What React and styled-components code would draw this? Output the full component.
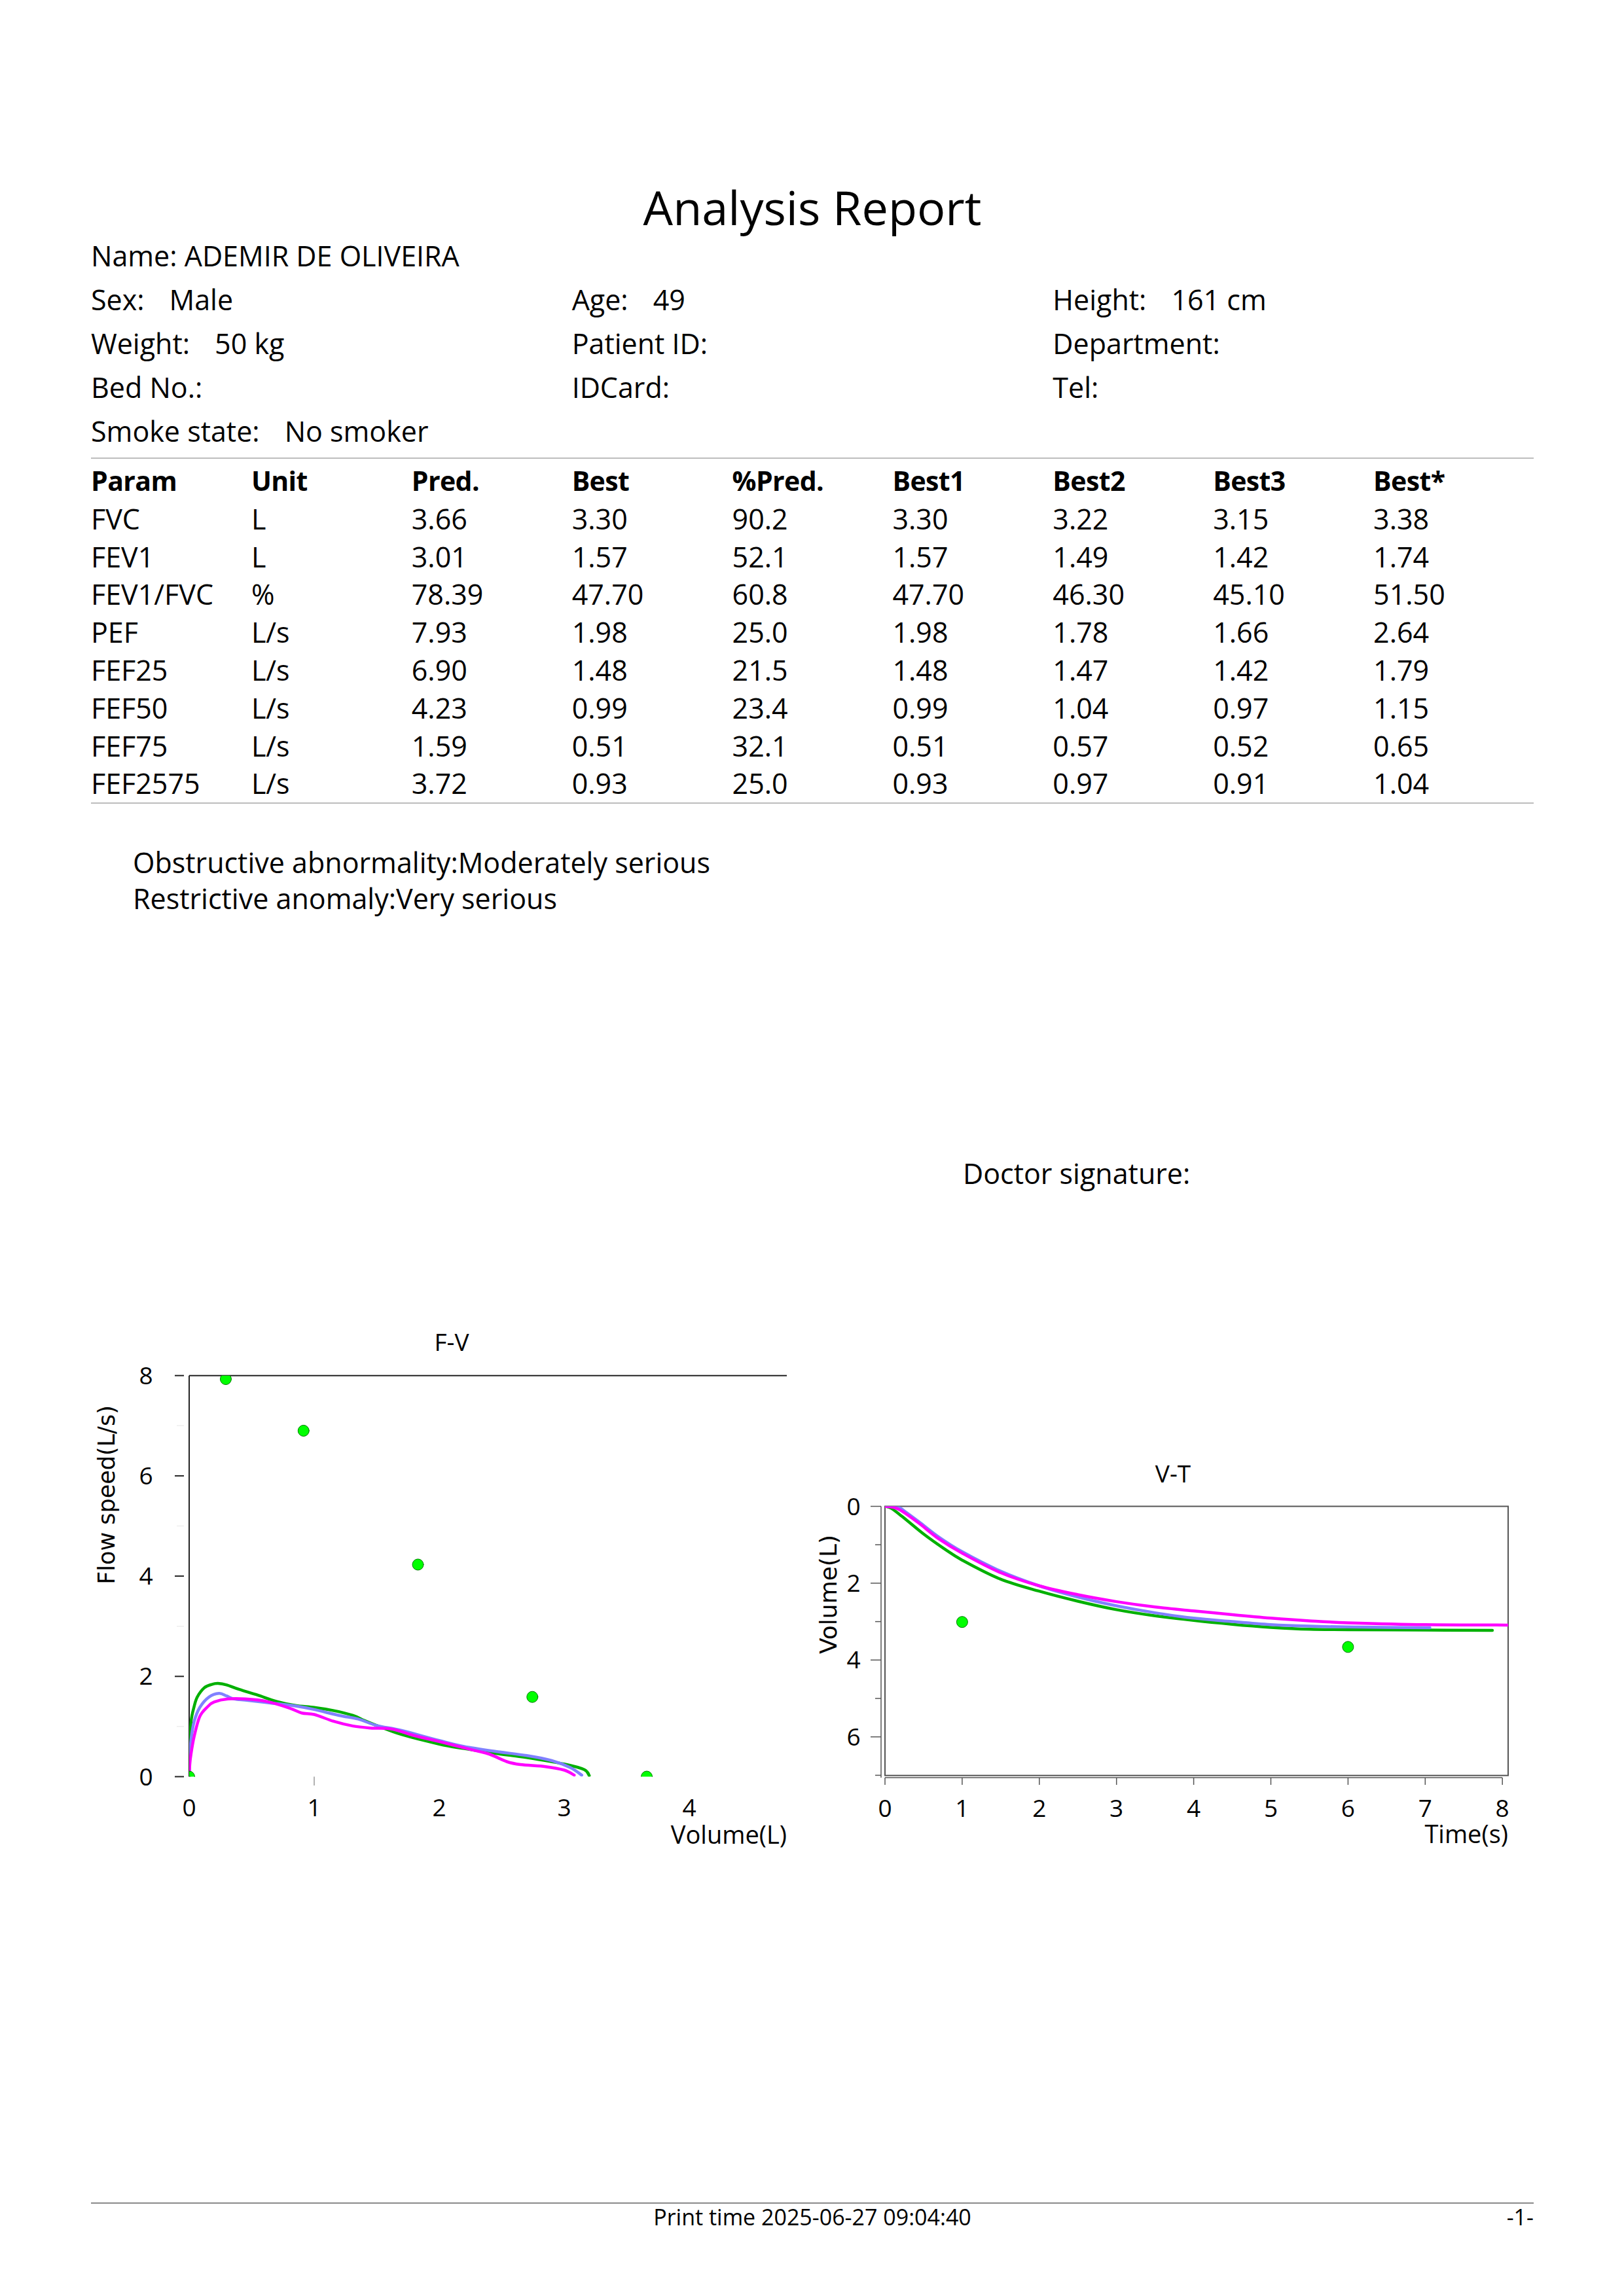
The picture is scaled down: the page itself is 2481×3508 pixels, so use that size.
import React from 'react';
import styled, { createGlobalStyle } from 'styled-components';

const GlobalStyle = createGlobalStyle`
  html, body { margin: 0; padding: 0; background: #ffffff; }
  body { font-family: "Open Sans", "Noto Sans", sans-serif; color: #000; }
`;

const Page = styled.div`
  width: 2481px;
  height: 3508px;
  box-sizing: border-box;
  padding: 275px 138px 0 139px;
  display: flex;
  flex-direction: column;
  background: #fff;
`;

const Title = styled.h1`
  margin: 0;
  font-weight: 400;
  font-size: 72px;
  line-height: 82px;
  text-align: center;
`;

const InfoGrid = styled.div`
  display: grid;
  grid-template-columns: repeat(3, 1fr);
  font-size: 43px;
  line-height: 67px;
`;

const InfoCell = styled.div`
  white-space: nowrap;
  grid-column: ${(p) => (p.$span ? `span ${p.$span}` : 'auto')};
`;

const InfoValue = styled.span`
  margin-left: 38px;
`;

const Table = styled.div`
  margin-top: 7px;
  padding-top: 5px;
  border-top: 2px solid #bdbdbd;
  border-bottom: 2px solid #bdbdbd;
  display: grid;
  grid-template-columns: repeat(9, 1fr);
  font-size: 43px;
  line-height: 57.8px;
`;

const Cell = styled.div`
  white-space: nowrap;
  font-weight: ${(p) => (p.$head ? 700 : 400)};
  font-size: ${(p) => (p.$head ? '41px' : '43px')};
  letter-spacing: ${(p) => (p.$head ? '-0.6px' : '0')};
`;

const Notes = styled.div`
  margin-top: 62px;
  padding-left: 64px;
  font-size: 43px;
  line-height: 55px;
`;

const Signature = styled.div`
  margin-top: 365px;
  margin-left: 1332px;
  font-size: 43px;
  line-height: 55px;
`;

const ChartsRow = styled.div`
  margin-top: 180px;
  display: flex;
`;

const ChartSvg = styled.svg`
  display: block;
  width: ${(p) => p.$w}px;
  height: 840px;
  overflow: visible;
  text {
    font-family: "Open Sans", "Noto Sans", sans-serif;
    fill: #000;
  }
  .axisTitle {
    font-family: "DejaVu Sans", "Verdana", sans-serif;
  }
`;

const Footer = styled.div`
  margin-top: 525px;
  border-top: 2px solid #8a8a8a;
  display: grid;
  grid-template-columns: 1fr auto 1fr;
  font-size: 34px;
  line-height: 40px;
`;

const FooterRight = styled.div`
  justify-self: end;
`;

function smoothPath(pts) {
  let d = `M${pts[0][0].toFixed(1)},${pts[0][1].toFixed(1)}`;
  for (let i = 0; i < pts.length - 1; i++) {
    const p0 = pts[i - 1] || pts[i];
    const p1 = pts[i];
    const p2 = pts[i + 1];
    const p3 = pts[i + 2] || p2;
    const c1x = p1[0] + (p2[0] - p0[0]) / 6;
    const c1y = p1[1] + (p2[1] - p0[1]) / 6;
    const c2x = p2[0] - (p3[0] - p1[0]) / 6;
    const c2y = p2[1] - (p3[1] - p1[1]) / 6;
    d += ` C${c1x.toFixed(1)},${c1y.toFixed(1)} ${c2x.toFixed(1)},${c2y.toFixed(1)} ${p2[0].toFixed(1)},${p2[1].toFixed(1)}`;
  }
  return d;
}

const GREEN = '#00b000';
const BLUE = '#8080ff';
const MAGENTA = '#ff00ff';

const fvGreen = [[0,0],[0.005,0.6],[0.015,1.1],[0.04,1.4],[0.065,1.59],[0.12,1.77],[0.18,1.84],[0.23,1.86],[0.3,1.83],[0.4,1.74],[0.545,1.63],[0.7,1.5],[0.85,1.42],[1.0,1.38],[1.15,1.32],[1.31,1.22],[1.4,1.12],[1.5,1.02],[1.7,0.84],[2.0,0.65],[2.2,0.56],[2.46,0.46],[2.7,0.38],[3.0,0.25],[3.16,0.14],[3.2,0.02]];
const fvBlue = [[0,0],[0.005,0.4],[0.015,0.74],[0.04,1.1],[0.085,1.38],[0.16,1.59],[0.24,1.66],[0.3,1.61],[0.36,1.55],[0.47,1.52],[0.65,1.47],[0.85,1.41],[1.0,1.34],[1.2,1.22],[1.35,1.15],[1.5,1.02],[1.7,0.92],[2.0,0.72],[2.2,0.6],[2.46,0.5],[2.7,0.42],[2.9,0.32],[3.05,0.18],[3.14,0.03]];
const fvMagenta = [[0,0],[0.005,0.25],[0.015,0.46],[0.04,0.8],[0.085,1.2],[0.15,1.4],[0.2,1.49],[0.31,1.55],[0.45,1.55],[0.62,1.5],[0.8,1.37],[0.9,1.27],[1.0,1.24],[1.16,1.1],[1.31,1.01],[1.45,0.97],[1.62,0.95],[1.8,0.82],[2.0,0.7],[2.27,0.53],[2.4,0.45],[2.54,0.3],[2.65,0.24],[2.85,0.2],[3.0,0.13],[3.08,0.03]];
const fvDots = [[0,0],[0.293,7.93],[0.915,6.90],[1.83,4.23],[2.745,1.59],[3.66,0]];

const vtGreen = [[0,0],[0.08,0.05],[0.22,0.26],[0.5,0.72],[0.75,1.08],[1.0,1.4],[1.49,1.89],[2.0,2.21],[2.5,2.47],[3.0,2.69],[3.5,2.85],[4.0,2.97],[4.5,3.07],[5.0,3.15],[5.5,3.2],[6.0,3.21],[7.0,3.22],[7.87,3.23]];
const vtBlue = [[0,0],[0.15,0],[0.25,0.12],[0.44,0.40],[0.7,0.8],[1.0,1.18],[1.49,1.68],[2.0,2.07],[2.5,2.36],[3.0,2.59],[3.5,2.77],[4.0,2.91],[4.5,3.0],[5.0,3.08],[5.5,3.12],[6.0,3.14],[7.06,3.16]];
const vtMagenta = [[0,0],[0.1,0.02],[0.2,0.1],[0.44,0.44],[0.7,0.85],[1.0,1.22],[1.49,1.72],[2.0,2.07],[2.5,2.3],[3.0,2.48],[3.5,2.62],[4.0,2.72],[4.5,2.82],[5.0,2.91],[5.5,2.98],[6.0,3.03],[7.0,3.08],[8.07,3.09]];
const vtDots = [[1, 3.01], [6, 3.66]];

function FVChart() {
  const fx = (v) => 289 + v * 191;
  const fy = (f) => 2714.5 - f * 76.6;
  const map = (pts) => pts.map(([v, f]) => [fx(v), fy(f)]);
  return (
    <ChartSvg $w={1100} viewBox="139 2000 1100 840">
      <defs>
        <clipPath id="fvclip">
          <rect x={289} y={2101.7} width={913} height={612.8} />
        </clipPath>
      </defs>
      <text x={690} y={2064} fontSize={37} textAnchor="middle">F-V</text>
      <line x1={289} y1={2101.7} x2={1202} y2={2101.7} stroke="#222" strokeWidth={2} />
      <line x1={289} y1={2101.7} x2={289} y2={2714.5} stroke="#222" strokeWidth={2} />
      {[1, 3, 5, 7].map((f) => (
        <line key={f} x1={270} y1={fy(f)} x2={281} y2={fy(f)} stroke="#eeeeee" strokeWidth={1.5} />
      ))}
      {[0, 2, 4, 6, 8].map((f) => (
        <g key={f}>
          <line x1={267} y1={fy(f)} x2={281} y2={fy(f)} stroke="#222" strokeWidth={2} />
          <text x={223} y={fy(f) + 13} fontSize={37} textAnchor="middle">{f}</text>
        </g>
      ))}
      <line x1={fx(1)} y1={2714.5} x2={fx(1)} y2={2728} stroke="#999" strokeWidth={1.5} />
      {[0, 1, 2, 3, 4].map((v) => (
        <text key={v} x={fx(v)} y={2775} fontSize={37} textAnchor="middle">{v}</text>
      ))}
      <text x={1202} y={2817} fontSize={38} textAnchor="end">Volume(L)</text>
      <text
        className="axisTitle"
        x={163}
        y={2284}
        fontSize={35}
        textAnchor="middle"
        dominantBaseline="central"
        transform="rotate(-90 163 2284)"
      >
        Flow speed(L/s)
      </text>
      <g clipPath="url(#fvclip)" fill="none" strokeWidth={4.5} strokeLinejoin="round" strokeLinecap="round">
        <path d={smoothPath(map(fvGreen))} stroke={GREEN} />
        <path d={smoothPath(map(fvBlue))} stroke={BLUE} />
        <path d={smoothPath(map(fvMagenta))} stroke={MAGENTA} />
        {fvDots.map(([v, f], i) => (
          <circle key={i} cx={fx(v)} cy={fy(f)} r={8.5} fill="#00ff00" stroke="#007a00" strokeWidth={1} />
        ))}
      </g>
    </ChartSvg>
  );
}

function VTChart() {
  const tx = (t) => 1352 + t * 117.9;
  const ty = (v) => 2301.5 + v * 58.7;
  const map = (pts) => pts.map(([t, v]) => [tx(t), ty(v)]);
  return (
    <ChartSvg $w={1104} viewBox="1239 2000 1104 840">
      <defs>
        <clipPath id="vtclip">
          <rect x={1352} y={2301.5} width={952} height={411.2} />
        </clipPath>
      </defs>
      <text x={1792} y={2265} fontSize={37} textAnchor="middle">V-T</text>
      <rect x={1352} y={2301.5} width={952} height={411.2} fill="none" stroke="#555" strokeWidth={2} />
      <line x1={1346} y1={2301.5} x2={1346} y2={2716} stroke="#555" strokeWidth={1.5} />
      {[0, 1, 2, 3, 4, 5, 6, 7].map((v) => (
        <line key={v} x1={v % 2 === 0 ? 1330 : 1337} y1={ty(v)} x2={1346} y2={ty(v)} stroke="#555" strokeWidth={1.5} />
      ))}
      {[0, 2, 4, 6].map((v) => (
        <text key={v} x={1304} y={ty(v) + 13} fontSize={37} textAnchor="middle">{v}</text>
      ))}
      <line x1={1352} y1={2716} x2={2295} y2={2716} stroke="#555" strokeWidth={1.5} />
      {[0, 1, 2, 3, 4, 5, 6, 7, 8].map((t) => (
        <g key={t}>
          <line x1={tx(t)} y1={2716} x2={tx(t)} y2={2727} stroke="#555" strokeWidth={1.5} />
          <text x={tx(t)} y={2776} fontSize={37} textAnchor="middle">{t}</text>
        </g>
      ))}
      <text x={2304} y={2816} fontSize={38} textAnchor="end">Time(s)</text>
      <text
        className="axisTitle"
        x={1265}
        y={2436}
        fontSize={36}
        textAnchor="middle"
        dominantBaseline="central"
        transform="rotate(-90 1265 2436)"
      >
        Volume(L)
      </text>
      <g clipPath="url(#vtclip)" fill="none" strokeWidth={4.5} strokeLinejoin="round" strokeLinecap="round">
        <path d={smoothPath(map(vtGreen))} stroke={GREEN} />
        <path d={smoothPath(map(vtBlue))} stroke={BLUE} />
        <path d={smoothPath(map(vtMagenta))} stroke={MAGENTA} />
      </g>
      {vtDots.map(([t, v], i) => (
        <circle key={i} cx={tx(t)} cy={ty(v)} r={8.5} fill="#00ff00" stroke="#007a00" strokeWidth={1} />
      ))}
    </ChartSvg>
  );
}

const headers = ['Param', 'Unit', 'Pred.', 'Best', '%Pred.', 'Best1', 'Best2', 'Best3', 'Best*'];
const rows = [
  ['FVC', 'L', '3.66', '3.30', '90.2', '3.30', '3.22', '3.15', '3.38'],
  ['FEV1', 'L', '3.01', '1.57', '52.1', '1.57', '1.49', '1.42', '1.74'],
  ['FEV1/FVC', '%', '78.39', '47.70', '60.8', '47.70', '46.30', '45.10', '51.50'],
  ['PEF', 'L/s', '7.93', '1.98', '25.0', '1.98', '1.78', '1.66', '2.64'],
  ['FEF25', 'L/s', '6.90', '1.48', '21.5', '1.48', '1.47', '1.42', '1.79'],
  ['FEF50', 'L/s', '4.23', '0.99', '23.4', '0.99', '1.04', '0.97', '1.15'],
  ['FEF75', 'L/s', '1.59', '0.51', '32.1', '0.51', '0.57', '0.52', '0.65'],
  ['FEF2575', 'L/s', '3.72', '0.93', '25.0', '0.93', '0.97', '0.91', '1.04'],
];

const info = [
  [['Sex:', 'Male'], ['Age:', '49'], ['Height:', '161 cm']],
  [['Weight:', '50 kg'], ['Patient ID:', ''], ['Department:', '']],
  [['Bed No.:', ''], ['IDCard:', ''], ['Tel:', '']],
  [['Smoke state:', 'No smoker']],
];

export default function App() {
  return (
    <>
      <GlobalStyle />
      <Page>
        <Title>Analysis Report</Title>
        <InfoGrid>
          <InfoCell $span={3}>Name: ADEMIR DE OLIVEIRA</InfoCell>
          {info.map((row, ri) => (
            <React.Fragment key={ri}>
              {row.map(([label, value], ci) => (
                <InfoCell key={ci} $span={ci === row.length - 1 ? 4 - row.length - ci + ci : 1}>
                  {label}
                  {value && <InfoValue>{value}</InfoValue>}
                </InfoCell>
              ))}
            </React.Fragment>
          ))}
        </InfoGrid>
        <Table>
          {headers.map((h) => (
            <Cell key={h} $head>{h}</Cell>
          ))}
          {rows.map((r, ri) =>
            r.map((c, ci) => <Cell key={`${ri}-${ci}`}>{c}</Cell>)
          )}
        </Table>
        <Notes>
          <div>Obstructive abnormality:Moderately serious</div>
          <div>Restrictive anomaly:Very serious</div>
        </Notes>
        <Signature>Doctor signature:</Signature>
        <ChartsRow>
          <FVChart />
          <VTChart />
        </ChartsRow>
        <Footer>
          <div />
          <div>Print time 2025-06-27 09:04:40</div>
          <FooterRight>-1-</FooterRight>
        </Footer>
      </Page>
    </>
  );
}
